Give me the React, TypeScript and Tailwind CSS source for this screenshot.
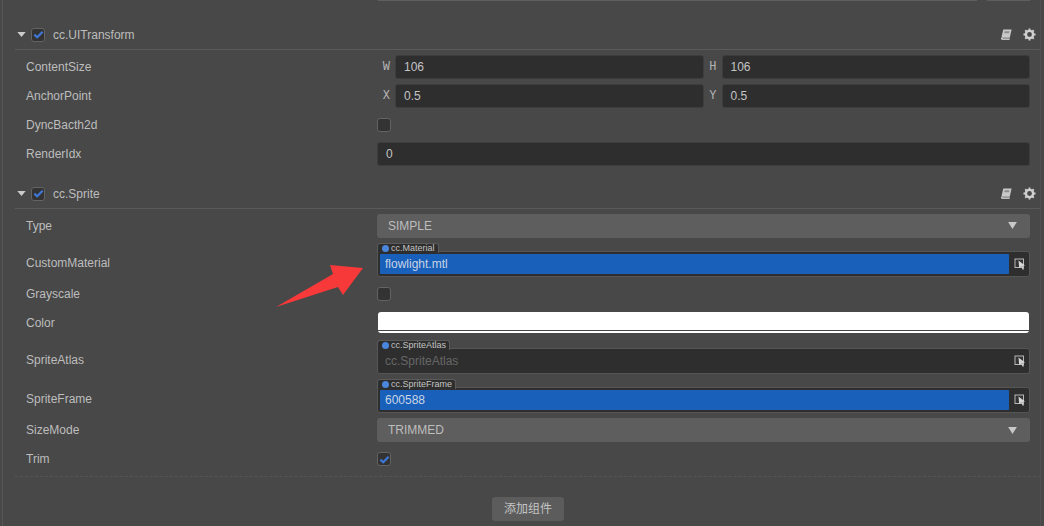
const font = { fontFamily: '"Liberation Sans", Arial, "Noto Sans CJK SC", sans-serif' };

function Check({ on = false }: { on?: boolean }) {
  return (
    <div className="flex size-[14px] items-center justify-center rounded-[3px] border border-[#636363] bg-[#333333]">
      {on && (
        <svg viewBox="0 0 12 12" className="size-[11px]">
          <path d="M1.5 6.2 4.6 9 10.5 3" fill="none" stroke="#3f77d8" strokeWidth="2.4" />
        </svg>
      )}
    </div>
  );
}

function BookIcon() {
  return (
    <svg viewBox="0 0 14 14" className="size-[13px]">
      <path d="M3.5 1.5H12.5L10.5 10.5H1.5Z" fill="#c9c9c9" />
      <path d="M1.2 10.5C1 12 1.6 12.7 2.6 12.7H10.3L10.6 11.4H3.2" fill="#e6e6e6" />
      <path d="M5 3.4H10.2L9.7 5.6H4.5Z" fill="#8e8e8e" />
    </svg>
  );
}

function GearIcon() {
  return (
    <svg viewBox="0 0 14 14" className="size-[13px]">
      <circle cx="7" cy="7" r="3.9" fill="none" stroke="#cfcfcf" strokeWidth="2.6" />
      <path d="M7 .5V3M7 11v2.500M.5 7H3M11 7h2.500M2.400 2.400l1.800 1.800M9.800 9.800l1.800 1.800M11.600 2.400 9.800 4.200M4.200 9.800l-1.800 1.800" stroke="#cfcfcf" strokeWidth="2" />
    </svg>
  );
}

function PickIcon() {
  return (
    <svg viewBox="0 0 12 12" className="size-[12px] shrink-0">
      <rect x="1" y="1" width="8.500" height="8.500" fill="#333333" stroke="#b8b8b8" strokeWidth="1" />
      <path d="M4.500 2.500 11 7.500 8.500 8 10 11.200 8.700 11.700 7.300 8.600 5.200 10Z" fill="#d6d6d6" />
    </svg>
  );
}

function Header({ title, mt }: { title: string; mt: string }) {
  return (
    <div className={`${mt} ml-[15px] mr-[3px] flex h-[29px] items-center border-b border-[#5a5a5a] pb-[1px] pr-[5px]`}>
      <svg viewBox="0 0 10 6" className="ml-[2px] mr-[5px] h-[5px] w-[9px]">
        <path d="M0 0H10L5 6Z" fill="#cccccc" />
      </svg>
      <Check on />
      <span className="ml-[8px] text-[12px] text-[#bdbdbd]">{title}</span>
      <div className="ml-auto flex items-center gap-[10px]">
        <BookIcon />
        <GearIcon />
      </div>
    </div>
  );
}

function Row({ label, h, children }: { label: string; h: string; children: React.ReactNode }) {
  return (
    <div className={`${h} ml-[26px] mr-[14px] flex items-center`}>
      <span className="w-[351px] shrink-0 text-[12px] text-[#bdbdbd]">{label}</span>
      <div className="min-w-0 flex-1">{children}</div>
    </div>
  );
}

function NumField({ axis, value }: { axis: string; value: string }) {
  return (
    <div className="flex flex-1 items-center">
      <span className="w-[18px] shrink-0 pr-[5px] text-right text-[12px] text-[#b4b4b4]" style={{ fontFamily: '"Liberation Mono", monospace' }}>
        {axis}
      </span>
      <div className="flex h-[24px] flex-1 items-center rounded-[3px] border border-[#3d3d3d] bg-[#2e2e2e] px-[8px] text-[12px] text-[#c4c4c4]">
        {value}
      </div>
    </div>
  );
}

function SelectBox({ value }: { value: string }) {
  return (
    <div className="flex h-[24px] items-center justify-between rounded-[3px] bg-[#5e5e5e] pl-[11px] pr-[13px] text-[12px] text-[#bdbdbd]">
      {value}
      <svg viewBox="0 0 10 8" className="h-[7px] w-[9px]">
        <path d="M0 0H10L5 8Z" fill="#c8c8c8" />
      </svg>
    </div>
  );
}

function AssetField({ type, value, filled }: { type: string; value: string; filled?: boolean }) {
  return (
    <div className="relative mb-[2px] mt-[4px]">
      <div className="absolute -top-[8px] left-0 flex h-[10px] items-center gap-[2px] rounded-t-[3px] border border-b-0 border-[#5a5a5a] bg-[#2e2e2e] pl-[4px] pr-[3px] text-[9px] leading-none text-[#c4c4c4]">
        <span className="size-[7px] rounded-full bg-[#4a86dc]" />
        {type}
      </div>
      <div className="flex h-[26px] items-center rounded-[3px] border border-[#555555] bg-[#2e2e2e] pl-[2px]">
        {filled ? (
          <div className="flex h-[20px] flex-1 items-center bg-[#1960bb] pl-[5px] text-[12px] text-[#c8d4e4]">{value}</div>
        ) : (
          <div className="flex h-[20px] flex-1 items-center pl-[5px] text-[12px] text-[#666666]">{value}</div>
        )}
        <div className="flex w-[20px] justify-center pl-[2px]">
          <PickIcon />
        </div>
      </div>
    </div>
  );
}

export default function App() {
  return (
    <div className="relative h-[526px] w-[1044px] overflow-hidden bg-[#484848]" style={font}>
      <div className="absolute inset-y-0 left-[2px] w-px bg-[#555555]" />
      <div className="absolute inset-y-0 right-[3px] w-px bg-[#505050]" />
      <div className="ml-[378px] mr-[14px] flex h-px gap-[10px]">
        <div className="flex-1 bg-[#5f5f5f]" />
        <div className="w-[43px] bg-[#5f5f5f]" />
      </div>

      <Header title="cc.UITransform" mt="mt-[20px]" />
      <div className="pt-[2px]">
        <Row label="ContentSize" h="h-[29px]">
          <div className="flex">
            <NumField axis="W" value="106" />
            <NumField axis="H" value="106" />
          </div>
        </Row>
        <Row label="AnchorPoint" h="h-[29px]">
          <div className="flex">
            <NumField axis="X" value="0.5" />
            <NumField axis="Y" value="0.5" />
          </div>
        </Row>
        <Row label="DyncBacth2d" h="h-[29px]">
          <Check />
        </Row>
        <Row label="RenderIdx" h="h-[29px]">
          <div className="flex h-[24px] items-center rounded-[3px] border border-[#3d3d3d] bg-[#2e2e2e] px-[8px] text-[12px] text-[#c4c4c4]">
            0
          </div>
        </Row>
      </div>

      <Header title="cc.Sprite" mt="mt-[12px]" />
      <div className="pt-[2px]">
        <Row label="Type" h="h-[29px]">
          <SelectBox value="SIMPLE" />
        </Row>
        <Row label="CustomMaterial" h="h-[40px] pt-[6px]">
          <AssetField type="cc.Material" value="flowlight.mtl" filled />
        </Row>
        <Row label="Grayscale" h="h-[28px]">
          <Check />
        </Row>
        <Row label="Color" h="h-[29px]">
          <div className="mx-px h-[21px] rounded-[3px] bg-white pt-[18px]">
            <div className="h-px bg-[#444444]" />
          </div>
        </Row>
        <Row label="SpriteAtlas" h="h-[40px] pt-[6px]">
          <AssetField type="cc.SpriteAtlas" value="cc.SpriteAtlas" />
        </Row>
        <Row label="SpriteFrame" h="h-[38px] pt-[6px]">
          <AssetField type="cc.SpriteFrame" value="600588" filled />
        </Row>
        <Row label="SizeMode" h="h-[30px]">
          <SelectBox value="TRIMMED" />
        </Row>
        <Row label="Trim" h="h-[28px]">
          <Check on />
        </Row>
      </div>

      <div className="ml-[15px] mr-[3px] mt-[3px] border-t border-dashed border-[#555555]" />
      <div className="mt-[20px] flex justify-center pl-[12px]">
        <div className="flex h-[24px] w-[72px] items-center justify-center rounded-[3px] bg-[#5c5c5c] text-[12px] text-[#c4c4c4]">
          添加组件
        </div>
      </div>

      <svg viewBox="0 0 88 44" className="absolute left-[276px] top-[264px] h-[44px] w-[88px]">
        <path d="M0 43 57 10 54 1 87 4 67 31 62 23Z" fill="#f8393a" />
      </svg>
    </div>
  );
}
